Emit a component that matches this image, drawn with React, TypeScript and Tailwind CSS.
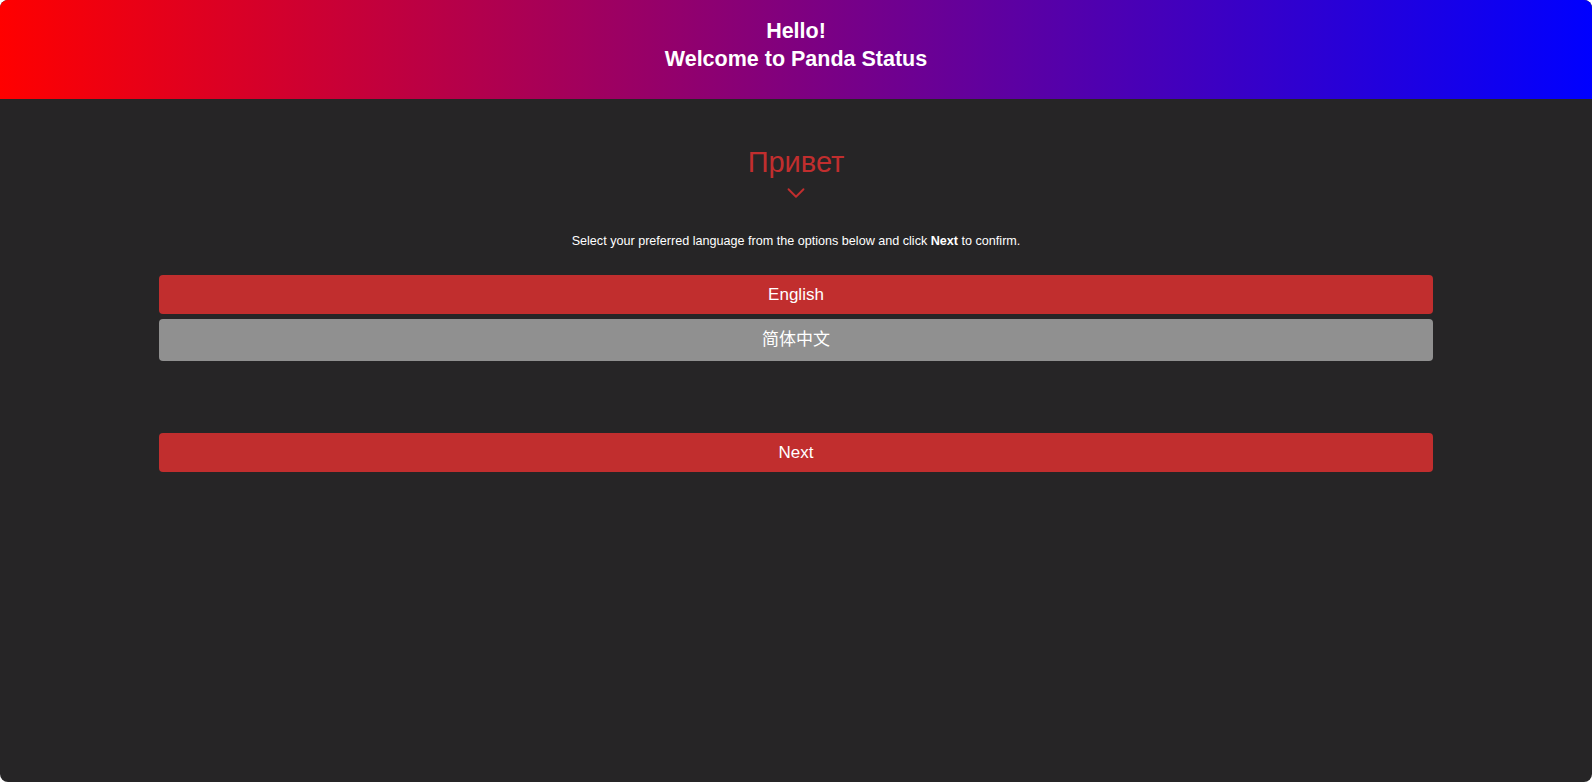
import React, { useState } from 'react';
import { ChevronDown } from 'lucide-react';

const languages = ['English', '简体中文'];

const App: React.FC = () => {
  const [selected, setSelected] = useState(0);

  return (
    <div className="bg-white h-screen w-full" style={{ fontFamily: '"Liberation Sans", Arial, "Noto Sans CJK SC", sans-serif' }}>
      <div className="h-full w-full rounded-lg overflow-hidden bg-[#262526] flex flex-col">
        <header className="h-[99px] shrink-0 bg-[linear-gradient(to_right,#ff0000,#0000ff)] flex flex-col items-center justify-center text-white font-bold text-[21.5px] leading-[28px] pb-[9px]">
          <div>Hello!</div>
          <div>Welcome to Panda Status</div>
        </header>

        <main className="flex flex-col items-center pt-[47px]">
          <h1 className="text-[#c12e2e] text-[29px] leading-[33px]">Привет</h1>
          <ChevronDown size={30} strokeWidth={1.5} className="text-[#c12e2e] -mt-[1px]" />
          <p className="text-white text-[12.6px] mt-[24px]">
            Select your preferred language from the options below and click <b>Next</b> to confirm.
          </p>

          <div className="w-4/5 mt-[24px] flex flex-col gap-[5px]">
            {languages.map((lang, i) => (
              <button
                key={lang}
                onClick={() => setSelected(i)}
                className={
                  'w-full rounded-[4px] text-white text-[17px] ' +
                  (i === selected ? 'bg-[#c12e2e] h-[39px]' : 'bg-[#909090] h-[42px]')
                }
              >
                {lang}
              </button>
            ))}
          </div>

          <button className="w-4/5 mt-[72px] h-[39px] rounded-[4px] bg-[#c12e2e] text-white text-[17px]">
            Next
          </button>
        </main>
      </div>
    </div>
  );
};

export default App;
